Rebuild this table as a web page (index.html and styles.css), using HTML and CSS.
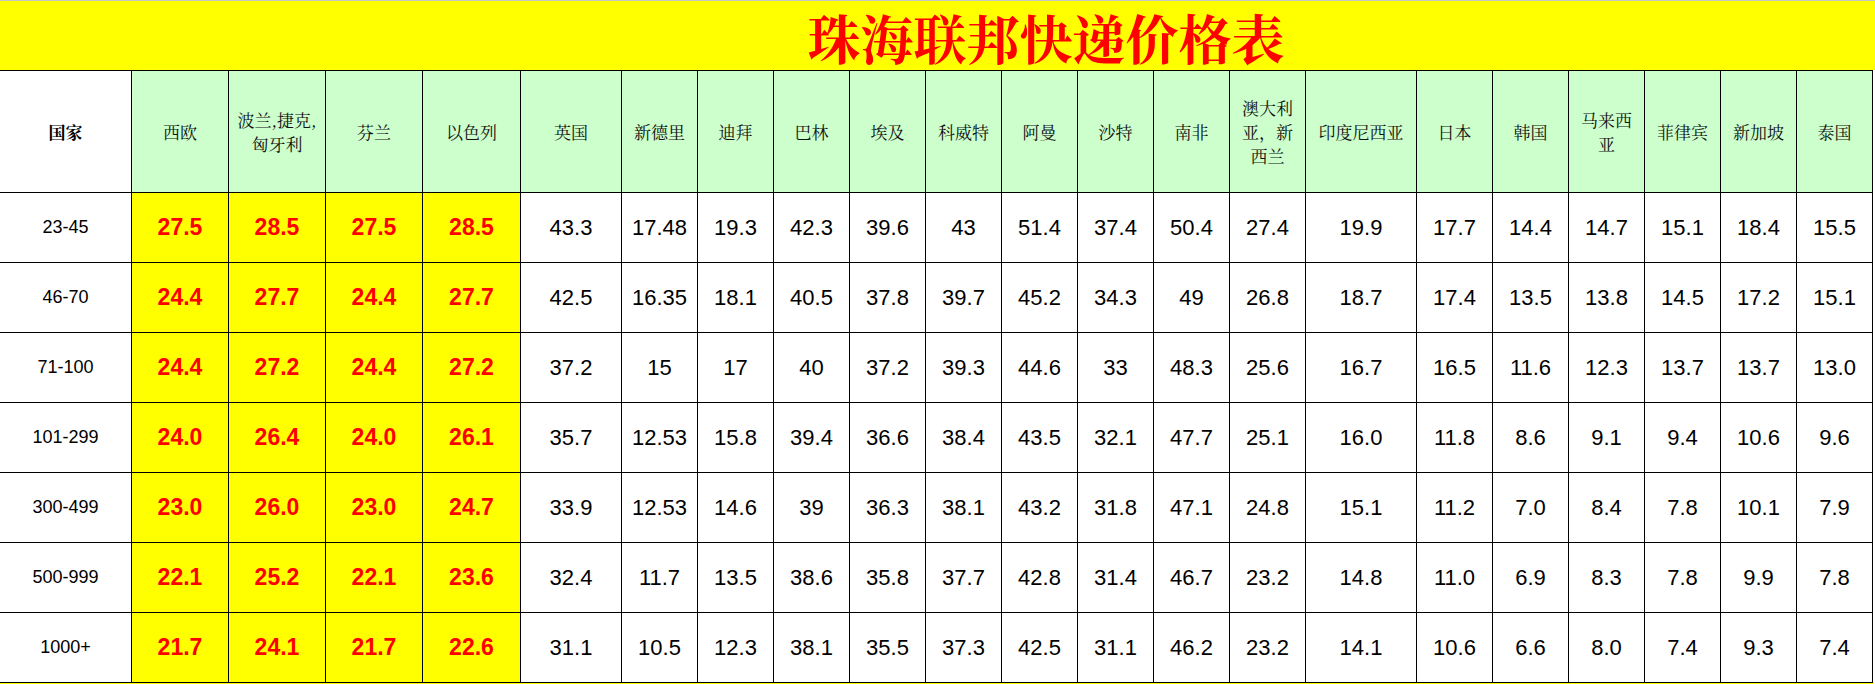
FILE: index.html
```html
<!DOCTYPE html>
<html lang="zh-CN">
<head>
<meta charset="utf-8">
<title>珠海联邦快递价格表</title>
<link rel="stylesheet" href="styles.css">
</head>
<body>
<div class="sheet">
  <div class="title"><h1>珠海联邦快递价格表</h1></div>
  <div class="grid">
    <div class="cell hd first">国家</div>
    <div class="cell hd">西欧</div>
    <div class="cell hd">波兰,捷克,<br>匈牙利</div>
    <div class="cell hd">芬兰</div>
    <div class="cell hd">以色列</div>
    <div class="cell hd">英国</div>
    <div class="cell hd">新德里</div>
    <div class="cell hd">迪拜</div>
    <div class="cell hd">巴林</div>
    <div class="cell hd">埃及</div>
    <div class="cell hd">科威特</div>
    <div class="cell hd">阿曼</div>
    <div class="cell hd">沙特</div>
    <div class="cell hd">南非</div>
    <div class="cell hd">澳大利<br>亚，新<br>西兰</div>
    <div class="cell hd">印度尼西亚</div>
    <div class="cell hd">日本</div>
    <div class="cell hd">韩国</div>
    <div class="cell hd">马来西<br>亚</div>
    <div class="cell hd">菲律宾</div>
    <div class="cell hd">新加坡</div>
    <div class="cell hd">泰国</div>

    <div class="cell lbl">23-45</div>
    <div class="cell hot">27.5</div><div class="cell hot">28.5</div><div class="cell hot">27.5</div><div class="cell hot">28.5</div>
    <div class="cell num">43.3</div><div class="cell num">17.48</div><div class="cell num">19.3</div><div class="cell num">42.3</div><div class="cell num">39.6</div><div class="cell num">43</div><div class="cell num">51.4</div><div class="cell num">37.4</div><div class="cell num">50.4</div><div class="cell num">27.4</div><div class="cell num">19.9</div><div class="cell num">17.7</div><div class="cell num">14.4</div><div class="cell num">14.7</div><div class="cell num">15.1</div><div class="cell num">18.4</div><div class="cell num">15.5</div>

    <div class="cell lbl">46-70</div>
    <div class="cell hot">24.4</div><div class="cell hot">27.7</div><div class="cell hot">24.4</div><div class="cell hot">27.7</div>
    <div class="cell num">42.5</div><div class="cell num">16.35</div><div class="cell num">18.1</div><div class="cell num">40.5</div><div class="cell num">37.8</div><div class="cell num">39.7</div><div class="cell num">45.2</div><div class="cell num">34.3</div><div class="cell num">49</div><div class="cell num">26.8</div><div class="cell num">18.7</div><div class="cell num">17.4</div><div class="cell num">13.5</div><div class="cell num">13.8</div><div class="cell num">14.5</div><div class="cell num">17.2</div><div class="cell num">15.1</div>

    <div class="cell lbl">71-100</div>
    <div class="cell hot">24.4</div><div class="cell hot">27.2</div><div class="cell hot">24.4</div><div class="cell hot">27.2</div>
    <div class="cell num">37.2</div><div class="cell num">15</div><div class="cell num">17</div><div class="cell num">40</div><div class="cell num">37.2</div><div class="cell num">39.3</div><div class="cell num">44.6</div><div class="cell num">33</div><div class="cell num">48.3</div><div class="cell num">25.6</div><div class="cell num">16.7</div><div class="cell num">16.5</div><div class="cell num">11.6</div><div class="cell num">12.3</div><div class="cell num">13.7</div><div class="cell num">13.7</div><div class="cell num">13.0</div>

    <div class="cell lbl">101-299</div>
    <div class="cell hot">24.0</div><div class="cell hot">26.4</div><div class="cell hot">24.0</div><div class="cell hot">26.1</div>
    <div class="cell num">35.7</div><div class="cell num">12.53</div><div class="cell num">15.8</div><div class="cell num">39.4</div><div class="cell num">36.6</div><div class="cell num">38.4</div><div class="cell num">43.5</div><div class="cell num">32.1</div><div class="cell num">47.7</div><div class="cell num">25.1</div><div class="cell num">16.0</div><div class="cell num">11.8</div><div class="cell num">8.6</div><div class="cell num">9.1</div><div class="cell num">9.4</div><div class="cell num">10.6</div><div class="cell num">9.6</div>

    <div class="cell lbl">300-499</div>
    <div class="cell hot">23.0</div><div class="cell hot">26.0</div><div class="cell hot">23.0</div><div class="cell hot">24.7</div>
    <div class="cell num">33.9</div><div class="cell num">12.53</div><div class="cell num">14.6</div><div class="cell num">39</div><div class="cell num">36.3</div><div class="cell num">38.1</div><div class="cell num">43.2</div><div class="cell num">31.8</div><div class="cell num">47.1</div><div class="cell num">24.8</div><div class="cell num">15.1</div><div class="cell num">11.2</div><div class="cell num">7.0</div><div class="cell num">8.4</div><div class="cell num">7.8</div><div class="cell num">10.1</div><div class="cell num">7.9</div>

    <div class="cell lbl">500-999</div>
    <div class="cell hot">22.1</div><div class="cell hot">25.2</div><div class="cell hot">22.1</div><div class="cell hot">23.6</div>
    <div class="cell num">32.4</div><div class="cell num">11.7</div><div class="cell num">13.5</div><div class="cell num">38.6</div><div class="cell num">35.8</div><div class="cell num">37.7</div><div class="cell num">42.8</div><div class="cell num">31.4</div><div class="cell num">46.7</div><div class="cell num">23.2</div><div class="cell num">14.8</div><div class="cell num">11.0</div><div class="cell num">6.9</div><div class="cell num">8.3</div><div class="cell num">7.8</div><div class="cell num">9.9</div><div class="cell num">7.8</div>

    <div class="cell lbl">1000+</div>
    <div class="cell hot">21.7</div><div class="cell hot">24.1</div><div class="cell hot">21.7</div><div class="cell hot">22.6</div>
    <div class="cell num">31.1</div><div class="cell num">10.5</div><div class="cell num">12.3</div><div class="cell num">38.1</div><div class="cell num">35.5</div><div class="cell num">37.3</div><div class="cell num">42.5</div><div class="cell num">31.1</div><div class="cell num">46.2</div><div class="cell num">23.2</div><div class="cell num">14.1</div><div class="cell num">10.6</div><div class="cell num">6.6</div><div class="cell num">8.0</div><div class="cell num">7.4</div><div class="cell num">9.3</div><div class="cell num">7.4</div>
  </div>
  <div class="next-row"></div>
</div>
</body>
</html>
```

FILE: styles.css
```css
* { box-sizing: border-box; }

html, body {
  margin: 0;
  padding: 0;
  background: #ffffff;
}

.sheet {
  width: 1875px;
  overflow: hidden;
}

.title {
  height: 70px;
  background: #ffff00;
  border-top: 1px solid #c6c6c6;
  display: flex;
  justify-content: center;
  align-items: flex-start;
  padding-left: 217px;
  padding-top: 10px;
}

.title h1 {
  margin: 0;
  font-family: "Noto Serif CJK SC", "Noto Sans CJK SC", serif;
  font-weight: 700;
  font-size: 53px;
  line-height: 1;
  color: #ff0000;
}

.grid {
  width: 1873px;
  display: grid;
  grid-template-columns: 132px 97px 97px 97px 98px 101px repeat(9, 76px) 111px repeat(6, 76px);
  grid-template-rows: 123px repeat(7, 70px);
}

.cell {
  display: flex;
  align-items: center;
  justify-content: center;
  text-align: center;
  border-right: 1px solid #000;
  border-bottom: 1px solid #000;
  background: #ffffff;
  color: #000;
}

.hd {
  border-top: 1px solid #000;
  background: #ccffcc;
  font-family: "Noto Serif CJK SC", "Noto Sans CJK SC", serif;
  font-size: 17px;
  line-height: 24px;
  color: #111;
}

.hd.first {
  background: #ffffff;
  font-weight: 700;
  color: #000;
}

.lbl {
  font-family: "Liberation Sans", Arial, sans-serif;
  font-size: 18px;
}

.hot {
  background: #ffff00;
  color: #ff0000;
  font-family: "Liberation Sans", Arial, sans-serif;
  font-weight: 700;
  font-size: 23px;
}

.num {
  font-family: "Liberation Sans", Arial, sans-serif;
  font-size: 22px;
}

.next-row {
  width: 1873px;
  height: 1px;
  background: #ffff00;
}
```
